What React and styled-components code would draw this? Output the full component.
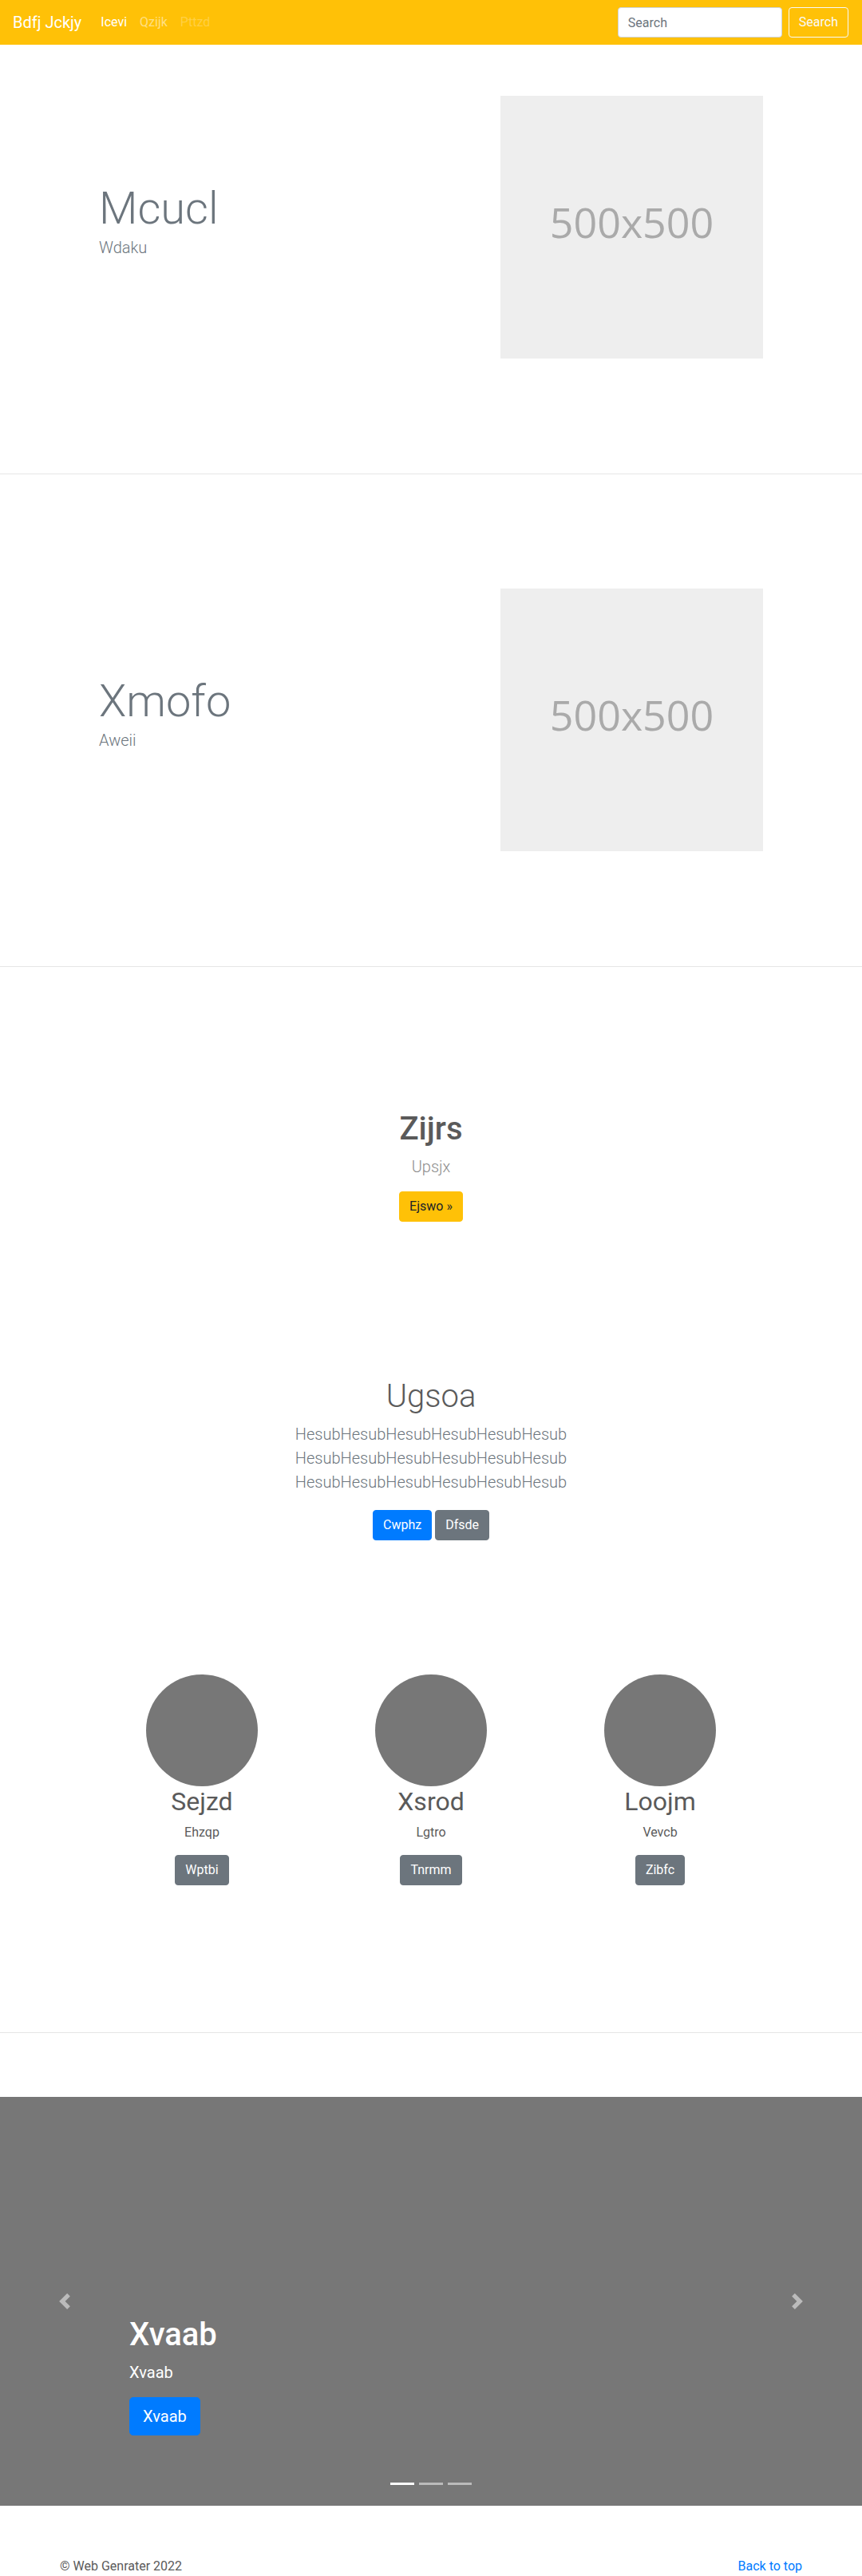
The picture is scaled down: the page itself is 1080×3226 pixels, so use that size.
import React from "react";
import styled, { createGlobalStyle } from "styled-components";

const GlobalStyle = createGlobalStyle`
  * { box-sizing: border-box; }
  body {
    margin: 0;
    font-family: "Segoe UI", Roboto, "Noto Sans", "Liberation Sans", sans-serif;
    font-size: 16px;
    line-height: 1.5;
    color: #5a5a5a;
    background: #fff;
  }
`;

const Navbar = styled.nav`
  display: flex;
  align-items: center;
  height: 56px;
  padding: 0 17px 0 16px;
  background: #ffc107;
`;

const Brand = styled.a`
  font-size: 20px;
  line-height: 1.5;
  color: #fff;
  margin-right: 16px;
  text-decoration: none;
`;

const NavLink = styled.a`
  padding: 8px;
  text-decoration: none;
  color: ${(p) =>
    p.$state === "active"
      ? "#fff"
      : p.$state === "disabled"
      ? "rgba(255,255,255,.25)"
      : "rgba(255,255,255,.5)"};
`;

const SearchForm = styled.form`
  margin-left: auto;
  display: flex;
  gap: 8px;
`;

const SearchInput = styled.input`
  width: 206px;
  height: 38px;
  padding: 6px 12px;
  font: inherit;
  color: #495057;
  border: 1px solid #ced4da;
  border-radius: 4px;
  background: #fff;
  &::placeholder { color: #6c757d; }
`;

const Btn = styled.button`
  display: inline-block;
  font-family: inherit;
  font-size: ${(p) => (p.$lg ? "20px" : "16px")};
  line-height: 1.5;
  padding: ${(p) => (p.$lg ? "8px 16px" : "6px 12px")};
  border-radius: ${(p) => (p.$lg ? "4.8px" : "4px")};
  border: 1px solid ${(p) => p.$bg};
  background: ${(p) => p.$bg};
  color: ${(p) => p.$fg || "#fff"};
  cursor: pointer;
`;

const OutlineBtn = styled(Btn)`
  background: transparent;
  border-color: #f8f9fa;
  color: #f8f9fa;
`;

const Container = styled.div`
  width: 960px;
  margin: 0 auto;
  padding: 0 15px;
`;

const Hero = styled.section`
  padding: ${(p) => p.$top}px 0 144px;
  border-bottom: 1px solid #e6e6e6;
`;

const HeroRow = styled.div`
  display: flex;
  align-items: center;
  justify-content: space-between;
  padding: 0 49px;
`;

const HeroTitle = styled.h1`
  font-size: 56px;
  font-weight: 300;
  line-height: 1.2;
  color: #6c757d;
  margin: 0;
`;

const Lead = styled.p`
  font-size: 20px;
  font-weight: 300;
  line-height: 1.5;
  color: ${(p) => p.$color || "#6c757d"};
  margin: 0 0 ${(p) => p.$mb ?? 16}px;
`;

const Placeholder = styled.div`
  width: 329px;
  height: 329px;
  flex: none;
  display: flex;
  align-items: center;
  justify-content: center;
  padding-bottom: 14px;
  background: #eee;
  color: #aaa;
  font-family: "Open Sans", "Noto Sans", sans-serif;
  font-size: 52px;
`;

const Center = styled.section`
  text-align: center;
  padding-top: ${(p) => p.$top}px;
`;

const Heading = styled.h1`
  font-size: 40px;
  font-weight: ${(p) => p.$weight || 500};
  line-height: 1.2;
  color: ${(p) => p.$color || "#5a5a5a"};
  margin: 0 0 8px;
`;

const Narrow = styled.div`
  width: 450px;
  margin: 0 auto;
`;

const ButtonGroup = styled.div`
  display: flex;
  justify-content: center;
  gap: 4px;
`;

const Features = styled.div`
  display: grid;
  grid-template-columns: repeat(3, 287px);
  justify-content: center;
  padding: 168px 0 184px;
  border-bottom: 1px solid #e6e6e6;
  text-align: center;
`;

const Feature = styled.div`
  display: flex;
  flex-direction: column;
  align-items: center;
`;

const Circle = styled.div`
  width: 140px;
  height: 140px;
  border-radius: 50%;
  background: #777;
`;

const FeatureTitle = styled.h2`
  font-size: 32px;
  font-weight: 400;
  line-height: 1.2;
  margin: 0 0 8px;
`;

const FeatureText = styled.p`
  margin: 0 0 16px;
`;

const Carousel = styled.div`
  position: relative;
  height: 512px;
  margin-top: 80px;
  background: #777;
  display: flex;
  flex-direction: column;
  justify-content: flex-end;
  padding: 0 162px 88px;
  color: #fff;
`;

const CaptionTitle = styled.h1`
  font-size: 40px;
  font-weight: 500;
  line-height: 1.2;
  margin: 0 0 8px;
`;

const CaptionText = styled.p`
  font-size: 20px;
  margin: 0 0 16px;
`;

const Control = styled.a`
  position: absolute;
  top: 0;
  bottom: 0;
  ${(p) => (p.$side === "prev" ? "left: 0;" : "right: 0;")}
  width: 15%;
  display: flex;
  align-items: center;
  justify-content: center;
  opacity: 0.5;
`;

const Indicators = styled.ol`
  position: absolute;
  left: 0;
  right: 0;
  bottom: 0;
  display: flex;
  justify-content: center;
  list-style: none;
  padding: 0;
  margin: 0 0 16px;
`;

const Indicator = styled.li`
  width: 30px;
  height: 3px;
  margin: 0 3px;
  box-sizing: content-box;
  border-top: 10px solid transparent;
  border-bottom: 10px solid transparent;
  background: #fff;
  background-clip: padding-box;
  opacity: ${(p) => (p.$active ? 1 : 0.5)};
`;

const Footer = styled.footer`
  display: flex;
  justify-content: space-between;
  margin-top: 64px;
  p { margin: 0 0 16px; }
  a { color: #007bff; text-decoration: none; }
`;

const features = [
  { title: "Sejzd", text: "Ehzqp", btn: "Wptbi" },
  { title: "Xsrod", text: "Lgtro", btn: "Tnrmm" },
  { title: "Loojm", text: "Vevcb", btn: "Zibfc" },
];

export default function App() {
  return (
    <>
      <GlobalStyle />
      <Navbar>
        <Brand href="#">Bdfj Jckjy</Brand>
        <NavLink $state="active" href="#">Icevi</NavLink>
        <NavLink href="#">Qzijk</NavLink>
        <NavLink $state="disabled" href="#">Pttzd</NavLink>
        <SearchForm onSubmit={(e) => e.preventDefault()}>
          <SearchInput placeholder="Search" />
          <OutlineBtn type="submit">Search</OutlineBtn>
        </SearchForm>
      </Navbar>

      <Hero $top={64}>
        <Container>
          <HeroRow>
            <div>
              <HeroTitle>Mcucl</HeroTitle>
              <Lead>Wdaku</Lead>
            </div>
            <Placeholder>500x500</Placeholder>
          </HeroRow>
        </Container>
      </Hero>

      <Hero $top={143}>
        <Container>
          <HeroRow>
            <div>
              <HeroTitle>Xmofo</HeroTitle>
              <Lead>Aweii</Lead>
            </div>
            <Placeholder>500x500</Placeholder>
          </HeroRow>
        </Container>
      </Hero>

      <Center $top={179}>
        <Heading>Zijrs</Heading>
        <Lead $color="#8c8c8c">Upsjx</Lead>
        <Btn $bg="#ffc107" $fg="#212529">Ejswo »</Btn>
      </Center>

      <Center $top={195}>
        <Narrow>
          <Heading $weight={300}>Ugsoa</Heading>
          <Lead $mb={20}>
            HesubHesubHesubHesubHesubHesub HesubHesubHesubHesubHesubHesub
            HesubHesubHesubHesubHesubHesub
          </Lead>
          <ButtonGroup>
            <Btn $bg="#007bff">Cwphz</Btn>
            <Btn $bg="#6c757d">Dfsde</Btn>
          </ButtonGroup>
        </Narrow>
      </Center>

      <Features>
        {features.map((f) => (
          <Feature key={f.title}>
            <Circle />
            <FeatureTitle>{f.title}</FeatureTitle>
            <FeatureText>{f.text}</FeatureText>
            <Btn $bg="#6c757d">{f.btn}</Btn>
          </Feature>
        ))}
      </Features>

      <Carousel>
        <div>
          <CaptionTitle>Xvaab</CaptionTitle>
          <CaptionText>Xvaab</CaptionText>
          <Btn $lg $bg="#007bff">Xvaab</Btn>
        </div>
        <Control $side="prev" href="#">
          <svg width="20" height="20" viewBox="0 0 8 8" fill="#fff">
            <path d="M5.25 0l-4 4 4 4 1.5-1.5L4.25 4l2.5-2.5L5.25 0z" />
          </svg>
        </Control>
        <Control $side="next" href="#">
          <svg width="20" height="20" viewBox="0 0 8 8" fill="#fff">
            <path d="M2.75 0l-1.5 1.5L3.75 4l-2.5 2.5L2.75 8l4-4-4-4z" />
          </svg>
        </Control>
        <Indicators>
          <Indicator $active />
          <Indicator />
          <Indicator />
        </Indicators>
      </Carousel>

      <Container>
        <Footer>
          <p>© Web Genrater 2022</p>
          <p><a href="#">Back to top</a></p>
        </Footer>
      </Container>
    </>
  );
}
